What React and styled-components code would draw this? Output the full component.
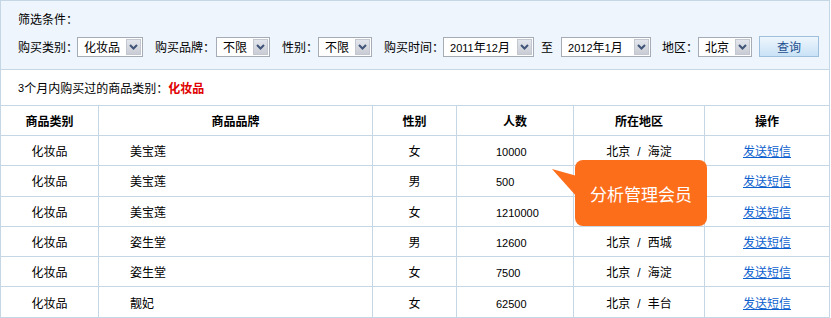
import React from 'react';
import styled, { createGlobalStyle } from 'styled-components';

const GlobalStyle = createGlobalStyle`
  body {
    margin: 0;
    background: #fff;
    font-family: "Noto Sans CJK SC", "Liberation Sans", sans-serif;
    font-size: 12px;
    color: #000;
  }
`;

const Wrapper = styled.div`
  position: relative;
  width: 830px;
  box-sizing: border-box;
  border: 1px solid #c5d6e4;
  border-bottom: none;
`;

const FilterPanel = styled.div`
  background: #eef5fc;
  border-bottom: 1px solid #c5d6e4;
  padding: 11px 0 0 17px;
  height: 57px;
`;

const FilterTitle = styled.div`
  line-height: 14px;
`;

const FilterRow = styled.div`
  display: flex;
  align-items: center;
  height: 21px;
  margin-top: 10px;
`;

const Label = styled.span`
  white-space: nowrap;
  margin-left: ${p => p.gap || 0}px;
`;

const SelectBox = styled.div`
  display: flex;
  align-items: center;
  width: ${p => p.w}px;
  height: 20px;
  box-sizing: border-box;
  border: 1px solid #a5acb5;
  background: #fff;
  margin-left: ${p => p.gap || 0}px;
  padding: 1px;
`;

const SelectText = styled.span`
  flex: 1;
  padding-left: 5px;
  white-space: nowrap;
`;

const ArrowBox = styled.span`
  width: 15px;
  height: 16px;
  box-sizing: border-box;
  border: 1px solid #c3c7cf;
  background: linear-gradient(#e3e6ec, #c9ccd4);
  display: flex;
  align-items: center;
  justify-content: center;
`;

const QueryButton = styled.button`
  margin-left: 7px;
  width: 60px;
  height: 21px;
  border: 1px solid #9fc0dc;
  background: linear-gradient(#eef6fd, #c9e2f6);
  color: #1d4f8e;
  font-family: inherit;
  font-size: 12px;
  padding: 0;
  cursor: pointer;
`;

const InfoLine = styled.div`
  height: 35px;
  display: flex;
  align-items: center;
  padding-left: 17px;
`;

const Highlight = styled.strong`
  color: #e00000;
  font-weight: bold;
`;

const Table = styled.table`
  width: 828px;
  table-layout: fixed;
  border-collapse: separate;
  border-spacing: 0;
  border-top: 1px solid #c5d6e4;
`;

const Th = styled.th`
  height: 30px;
  box-sizing: border-box;
  border-right: ${p => (p.last ? 'none' : '1px solid #c5d6e4')};
  border-bottom: 1px solid #c5d6e4;
  font-weight: bold;
  text-align: center;
  padding: 0;
`;

const Td = styled.td`
  height: 30.3px;
  box-sizing: border-box;
  border-right: ${p => (p.last ? 'none' : '1px solid #c5d6e4')};
  border-bottom: 1px solid #c5d6e4;
  text-align: ${p => p.align || 'center'};
  padding: 0 0 0 ${p => p.pl || 0}px;
  white-space: nowrap;
`;

const Num = styled.span`
  font-family: "Liberation Sans", sans-serif;
  font-size: 11px;
`;

const Slash = styled.span`
  font-family: "Liberation Sans", sans-serif;
  margin: 0 7px;
`;

const SmsLink = styled.a`
  color: #0d5fce;
  text-decoration: underline;
  cursor: pointer;
`;

const Callout = styled.div`
  position: absolute;
  left: 574px;
  top: 159px;
  width: 132px;
  height: 66px;
  background: #fd6e1b;
  border-radius: 8px;
  color: #fff;
  font-size: 17px;
  display: flex;
  align-items: center;
  justify-content: center;
  padding-top: 1px;
  box-sizing: border-box;
`;

const Tail = styled.svg`
  position: absolute;
  left: -23px;
  top: 8px;
`;

function Select({ children, w, gap }) {
  return (
    <SelectBox w={w} gap={gap}>
      <SelectText>{children}</SelectText>
      <ArrowBox>
        <svg width="9" height="6" viewBox="0 0 9 6">
          <polyline points="1,1 4.5,4.5 8,1" fill="none" stroke="#3f5478" strokeWidth="2" />
        </svg>
      </ArrowBox>
    </SelectBox>
  );
}

function Area({ city, district }) {
  if (!city) return null;
  return (
    <>
      {city}<Slash>/</Slash>{district}
    </>
  );
}

// rows 2 and 3 sit under the callout, so their area is not shown
const rows = [
  ['化妆品', '美宝莲', '女', '10000', '北京', '海淀'],
  ['化妆品', '美宝莲', '男', '500', '', ''],
  ['化妆品', '美宝莲', '女', '1210000', '', ''],
  ['化妆品', '姿生堂', '男', '12600', '北京', '西城'],
  ['化妆品', '姿生堂', '女', '7500', '北京', '海淀'],
  ['化妆品', '靓妃', '女', '62500', '北京', '丰台'],
];

export default function App() {
  return (
    <>
      <GlobalStyle />
      <Wrapper>
        <FilterPanel>
          <FilterTitle>筛选条件：</FilterTitle>
          <FilterRow>
            <Label>购买类别：</Label>
            <Select w={66} gap={-1}>化妆品</Select>
            <Label gap={12}>购买品牌：</Label>
            <Select w={54} gap={1}>不限</Select>
            <Label gap={12}>性别：</Label>
            <Select w={54}>不限</Select>
            <Label gap={12}>购买时间：</Label>
            <Select w={91} gap={-1}><Num>2011</Num>年<Num>12</Num>月</Select>
            <Label gap={7}>至</Label>
            <Select w={90} gap={8}><Num>2012</Num>年<Num>1</Num>月</Select>
            <Label gap={11}>地区：</Label>
            <Select w={54}>北京</Select>
            <QueryButton>查询</QueryButton>
          </FilterRow>
        </FilterPanel>
        <InfoLine>
          <Num>3</Num>个月内购买过的商品类别：<Highlight>化妆品</Highlight>
        </InfoLine>
        <Table>
          <colgroup>
            <col style={{ width: 98 }} />
            <col style={{ width: 274 }} />
            <col style={{ width: 84 }} />
            <col style={{ width: 117 }} />
            <col style={{ width: 131 }} />
            <col style={{ width: 124 }} />
          </colgroup>
          <thead>
            <tr>
              <Th>商品类别</Th>
              <Th>商品品牌</Th>
              <Th>性别</Th>
              <Th>人数</Th>
              <Th>所在地区</Th>
              <Th last>操作</Th>
            </tr>
          </thead>
          <tbody>
            {rows.map((r, i) => (
              <tr key={i}>
                <Td>{r[0]}</Td>
                <Td align="left" pl={31}>{r[1]}</Td>
                <Td>{r[2]}</Td>
                <Td align="left" pl={39}><Num>{r[3]}</Num></Td>
                <Td><Area city={r[4]} district={r[5]} /></Td>
                <Td last><SmsLink>发送短信</SmsLink></Td>
              </tr>
            ))}
          </tbody>
        </Table>
        <Callout>
          <Tail width="25" height="30" viewBox="0 0 25 30">
            <polygon points="0,1 25,8 25,29" fill="#fd6e1b" />
          </Tail>
          分析管理会员
        </Callout>
      </Wrapper>
    </>
  );
}
